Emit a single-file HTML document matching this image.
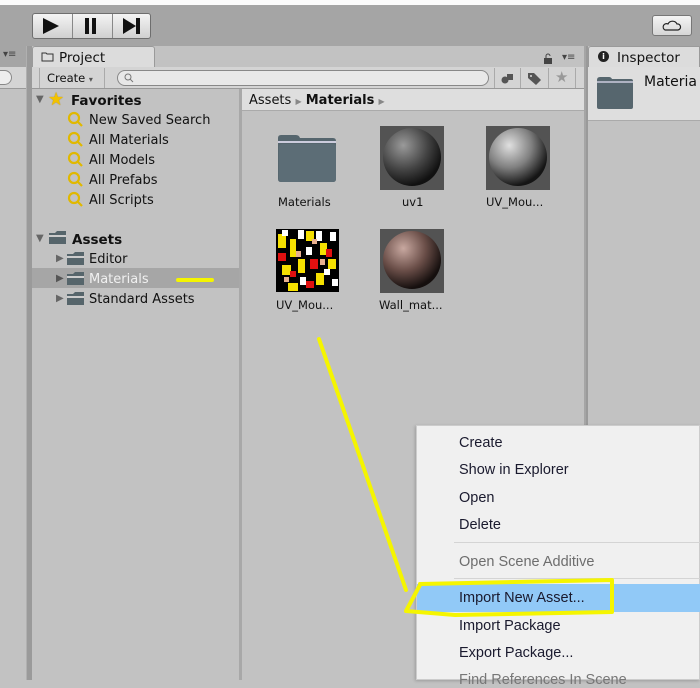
<!DOCTYPE html>
<html><head><meta charset="utf-8"><style>
*{margin:0;padding:0;box-sizing:border-box}
body{width:700px;height:680px;overflow:hidden;background:#c2c2c2;position:relative;font-family:"DejaVu Sans","Liberation Sans",sans-serif;font-size:13px;color:#111}
.a{position:absolute}
.t{position:absolute;white-space:nowrap}
.mi{position:absolute;left:459px;font-family:"Liberation Sans",sans-serif;font-size:14.5px;color:#1a1a2e}
</style></head><body>
<div class="a" style="left:0;top:0;width:700px;height:5px;background:#fbfbfb"></div>
<div class="a" style="left:0;top:5px;width:700px;height:41px;background:#a5a5a5"></div>
<div class="a" style="left:32px;top:13px;width:119px;height:26px;border:1px solid #6e6e6e;border-radius:3px;background:linear-gradient(#f4f4f4,#d0d0d0)"></div>
<div class="a" style="left:72px;top:14px;width:1px;height:24px;background:#888"></div>
<div class="a" style="left:112px;top:14px;width:1px;height:24px;background:#888"></div>
<svg class="a" style="left:32px;top:13px" width="120" height="26"><path d="M11 5 L27 13 L11 21Z" fill="#111"/><rect x="53" y="5" width="4" height="16" fill="#111"/><rect x="60" y="5" width="4" height="16" fill="#111"/><path d="M91 5 L104 13 L91 21Z" fill="#111"/><rect x="104" y="5" width="4" height="16" fill="#111"/></svg>
<div class="a" style="left:652px;top:15px;width:40px;height:21px;border:1px solid #777;border-radius:3px;background:linear-gradient(#f4f4f4,#d6d6d6)"></div>
<svg class="a" style="left:662px;top:18px" width="20" height="15"><path d="M3 12 H16 A3 3 0 0 0 15 6 A5 5 0 0 0 6 6 A3 3 0 0 0 3 12Z" fill="none" stroke="#222" stroke-width="1.2"/></svg>
<div class="a" style="left:0;top:46px;width:27px;height:21px;background:#a5a5a5"></div>
<div class="t" style="left:3px;top:49px;font-size:10px;color:#444">▾≡</div>
<div class="a" style="left:0;top:67px;width:27px;height:22px;background:#d4d4d4;border-bottom:1px solid #999"></div>
<div class="a" style="left:-10px;top:70px;width:22px;height:15px;border:1px solid #888;border-radius:8px;background:#eee"></div>
<div class="a" style="left:26px;top:46px;width:6px;height:634px;background:#9a9a9a;border-left:1px solid #b0b0b0"></div>
<div class="a" style="left:32px;top:46px;width:123px;height:22px;background:#dcdcdc;border:1px solid #9a9a9a;border-bottom:none;border-radius:3px 3px 0 0"></div>
<svg class="a" style="left:41px;top:51px" width="14" height="11"><path d="M1 2 H5 L6 3 H12 V10 H1Z" fill="#ddd" stroke="#333"/></svg>
<div class="t" style="left:59px;top:50px;font-size:13.5px">Project</div>
<svg class="a" style="left:543px;top:53px" width="10" height="12"><rect x="1" y="5" width="8" height="6" fill="#444"/><path d="M3 5 V3 A2 2 0 0 1 7 3" fill="none" stroke="#444"/></svg>
<div class="t" style="left:562px;top:52px;font-size:10px;color:#444">▾≡</div>
<div class="a" style="left:32px;top:67px;width:552px;height:22px;background:#d4d4d4;border-bottom:1px solid #999"></div>
<div class="a" style="left:39px;top:68px;width:66px;height:20px;border-left:1px solid #aaa;border-right:1px solid #aaa"></div>
<div class="t" style="left:47px;top:71px;font-size:11.5px">Create <span style="font-size:8px;color:#555">▾</span></div>
<div class="a" style="left:117px;top:70px;width:372px;height:16px;border:1px solid #888;border-radius:8px;background:#e8e8e8"></div>
<svg class="a" style="left:123px;top:72px" width="12" height="12"><circle cx="5" cy="5" r="3" fill="none" stroke="#777"/><path d="M7 7 L10 10" stroke="#777"/></svg>
<div class="a" style="left:494px;top:68px;width:1px;height:20px;background:#aaa"></div>
<div class="a" style="left:520px;top:68px;width:1px;height:20px;background:#aaa"></div>
<div class="a" style="left:548px;top:68px;width:1px;height:20px;background:#aaa"></div>
<div class="a" style="left:575px;top:68px;width:1px;height:20px;background:#aaa"></div>
<svg class="a" style="left:499px;top:71px" width="18" height="15"><circle cx="6" cy="9" r="3.5" fill="#555"/><rect x="8" y="3" width="6" height="6" fill="#555"/></svg>
<svg class="a" style="left:526px;top:71px" width="18" height="15"><path d="M2 2 H8 L15 9 L10 14 L2 7Z" fill="#555"/><circle cx="5" cy="5" r="1" fill="#ddd"/></svg>
<div class="t" style="left:555px;top:68px;font-size:15px;color:#999">★</div>
<div class="a" style="left:239px;top:89px;width:3px;height:591px;background:#a8a8a8"></div>
<div class="t" style="left:36px;top:94px;font-size:10px;color:#666">▼</div>
<div class="t" style="left:48px;top:89px;font-size:18px;color:#f2c200;text-shadow:0 0 1px #a07800">★</div>
<div class="t" style="left:71px;top:93px;font-weight:bold;font-size:13.5px">Favorites</div>
<svg class="a" style="left:66px;top:111px" width="20" height="100">
<g fill="none" stroke="#e0b800" stroke-width="2.2"><circle cx="8" cy="7" r="5"/><path d="M11.5 10.5 L16 15"/><circle cx="8" cy="27" r="5"/><path d="M11.5 30.5 L16 35"/><circle cx="8" cy="47" r="5"/><path d="M11.5 50.5 L16 55"/><circle cx="8" cy="67" r="5"/><path d="M11.5 70.5 L16 75"/><circle cx="8" cy="87" r="5"/><path d="M11.5 90.5 L16 95"/></g></svg>
<div class="t" style="left:89px;top:113px">New Saved Search</div>
<div class="t" style="left:89px;top:133px">All Materials</div>
<div class="t" style="left:89px;top:153px">All Models</div>
<div class="t" style="left:89px;top:173px">All Prefabs</div>
<div class="t" style="left:89px;top:193px">All Scripts</div>
<div class="a" style="left:32px;top:268px;width:207px;height:20px;background:#a6a6a6"></div>
<div class="t" style="left:36px;top:233px;font-size:10px;color:#666">▼</div>
<div class="t" style="left:56px;top:253px;font-size:10px;color:#666">▶</div>
<div class="t" style="left:56px;top:273px;font-size:10px;color:#555">▶</div>
<div class="t" style="left:56px;top:293px;font-size:10px;color:#666">▶</div>
<svg class="a" style="left:48px;top:230px" width="20" height="80"><path d="M1 3 H7 L9 1 H18 V14 H1Z" fill="#56656b"/><rect x="1" y="5" width="17" height="2" fill="#ccc"/></svg>
<svg class="a" style="left:66px;top:251px" width="20" height="60"><g fill="#56656b"><path d="M1 3 H7 L9 1 H18 V14 H1Z"/><path d="M1 23 H7 L9 21 H18 V34 H1Z"/><path d="M1 43 H7 L9 41 H18 V54 H1Z"/></g><g fill="#ccc"><rect x="1" y="5" width="17" height="2"/><rect x="1" y="25" width="17" height="2"/><rect x="1" y="45" width="17" height="2"/></g></svg>
<div class="t" style="left:72px;top:232px;font-weight:bold;font-size:13.5px">Assets</div>
<div class="t" style="left:89px;top:252px">Editor</div>
<div class="t" style="left:89px;top:272px;color:#f0f0f0">Materials</div>
<div class="t" style="left:89px;top:292px">Standard Assets</div>
<div class="a" style="left:242px;top:89px;width:342px;height:22px;background:#dedede;border-bottom:1px solid #aaa"></div>
<div class="t" style="left:249px;top:93px">Assets <span style="font-size:8px;color:#888">▶</span> <b>Materials</b> <span style="font-size:8px;color:#888">▶</span></div>
<svg class="a" style="left:276px;top:134px" width="62" height="50"><path d="M2 4 Q2 1 5 1 H20 Q23 1 24 4 H57 Q60 4 60 7 V45 Q60 48 57 48 H5 Q2 48 2 45Z" fill="#56666e"/><path d="M2 8 H60" stroke="#ccd" stroke-width="2"/><rect x="3" y="10" width="57" height="38" rx="3" fill="#5c6d76"/></svg>
<div class="t" style="left:278px;top:195px;font-size:11.5px">Materials</div>
<svg class="a" style="left:380px;top:126px" width="64" height="64"><defs><radialGradient id="g1" cx="0.35" cy="0.3" r="0.7"><stop offset="0" stop-color="#9a9a9a"/><stop offset="0.6" stop-color="#444"/><stop offset="1" stop-color="#111"/></radialGradient><radialGradient id="g2" cx="0.35" cy="0.3" r="0.7"><stop offset="0" stop-color="#e0e0e0"/><stop offset="0.55" stop-color="#808080"/><stop offset="1" stop-color="#151515"/></radialGradient><radialGradient id="g3" cx="0.35" cy="0.3" r="0.7"><stop offset="0" stop-color="#c8a8a0"/><stop offset="0.55" stop-color="#6a4e48"/><stop offset="1" stop-color="#150f0e"/></radialGradient></defs><rect width="64" height="64" fill="#535353"/><circle cx="32" cy="31" r="29" fill="url(#g1)"/></svg>
<svg class="a" style="left:486px;top:126px" width="64" height="64"><rect width="64" height="64" fill="#535353"/><circle cx="32" cy="31" r="29" fill="url(#g2)"/></svg>
<div class="t" style="left:402px;top:195px;font-size:11.5px">uv1</div>
<div class="t" style="left:486px;top:195px;font-size:11.5px">UV_Mou...</div>
<svg class="a" style="left:276px;top:229px" width="63" height="63"><rect width="63" height="63" fill="#000"/>
<g fill="#f5e000"><rect x="2" y="5" width="8" height="14"/><rect x="14" y="10" width="6" height="18"/><rect x="30" y="2" width="8" height="10"/><rect x="44" y="14" width="7" height="12"/><rect x="6" y="36" width="9" height="10"/><rect x="22" y="30" width="7" height="14"/><rect x="40" y="44" width="8" height="12"/><rect x="52" y="30" width="8" height="10"/><rect x="12" y="54" width="10" height="8"/></g>
<g fill="#fff"><rect x="6" y="1" width="6" height="6"/><rect x="22" y="1" width="6" height="9"/><rect x="40" y="2" width="6" height="10"/><rect x="54" y="3" width="6" height="9"/><rect x="30" y="18" width="6" height="8"/><rect x="48" y="40" width="6" height="6"/><rect x="24" y="48" width="6" height="8"/><rect x="56" y="50" width="6" height="7"/></g>
<g fill="#e01010"><rect x="2" y="24" width="8" height="8"/><rect x="34" y="30" width="8" height="10"/><rect x="50" y="20" width="6" height="8"/><rect x="30" y="52" width="8" height="7"/><rect x="14" y="42" width="6" height="6"/></g>
<g fill="#e8b090"><rect x="20" y="22" width="5" height="6"/><rect x="44" y="30" width="5" height="6"/><rect x="8" y="48" width="5" height="5"/><rect x="36" y="10" width="5" height="5"/></g></svg>
<svg class="a" style="left:380px;top:229px" width="64" height="64"><rect width="64" height="64" fill="#535353"/><circle cx="32" cy="31" r="29" fill="url(#g3)"/></svg>
<div class="t" style="left:276px;top:298px;font-size:11.5px">UV_Mou...</div>
<div class="t" style="left:379px;top:298px;font-size:11.5px">Wall_mat...</div>
<div class="a" style="left:584px;top:46px;width:3px;height:634px;background:#a5a5a5"></div>
<div class="a" style="left:586px;top:46px;width:2px;height:634px;background:#9a9a9a"></div>
<div class="a" style="left:588px;top:46px;width:112px;height:22px;background:#dcdcdc;border:1px solid #9a9a9a;border-bottom:none;border-radius:3px 0 0 0"></div>
<div class="a" style="left:598px;top:51px;width:11px;height:11px;border-radius:50%;background:#222;color:#fff;font-size:8px;font-weight:bold;text-align:center;line-height:11px">i</div>
<div class="t" style="left:617px;top:50px;font-size:13.5px">Inspector</div>
<div class="a" style="left:588px;top:67px;width:112px;height:54px;background:#dedede;border-bottom:1px solid #aaa"></div>
<svg class="a" style="left:596px;top:76px" width="38" height="34"><path d="M1 4 Q1 1 4 1 H13 Q15 1 16 3 H35 Q37 3 37 5 V31 Q37 33 35 33 H3 Q1 33 1 31Z" fill="#56666e"/><path d="M1 6 H37" stroke="#ccd" stroke-width="1.5"/></svg>
<div class="t" style="left:644px;top:74px;font-size:14px">Materia</div>
<div class="a" style="left:416px;top:425px;width:284px;height:255px;background:#f0f0f0;border:1px solid #ccc;box-shadow:-1px 1px 3px rgba(0,0,0,0.2)"></div>
<div class="a" style="left:454px;top:542px;width:246px;height:1px;background:#d4d4d4"></div>
<div class="a" style="left:454px;top:578px;width:246px;height:1px;background:#d4d4d4"></div>
<div class="a" style="left:417px;top:584px;width:283px;height:28px;background:#91c9f7"></div>
<div class="mi" style="top:435px">Create</div>
<div class="mi" style="top:462px">Show in Explorer</div>
<div class="mi" style="top:490px">Open</div>
<div class="mi" style="top:517px">Delete</div>
<div class="mi" style="top:554px;color:#6d6d6d">Open Scene Additive</div>
<div class="mi" style="top:590px">Import New Asset...</div>
<div class="mi" style="top:618px">Import Package</div>
<div class="mi" style="top:645px">Export Package...</div>
<div class="mi" style="top:672px;color:#777">Find References In Scene</div>
<svg class="a" style="left:0;top:0" width="700" height="680"><g fill="none" stroke="#f5f500" stroke-linecap="round" stroke-linejoin="round">
<path d="M178 280 L212 280" stroke-width="4"/>
<path d="M319 339 L406 590" stroke-width="4"/>
<path d="M420 584 L612 580 L612 612 L455 615 L406 611 L420 585" stroke-width="4"/></g></svg>
</body></html>
